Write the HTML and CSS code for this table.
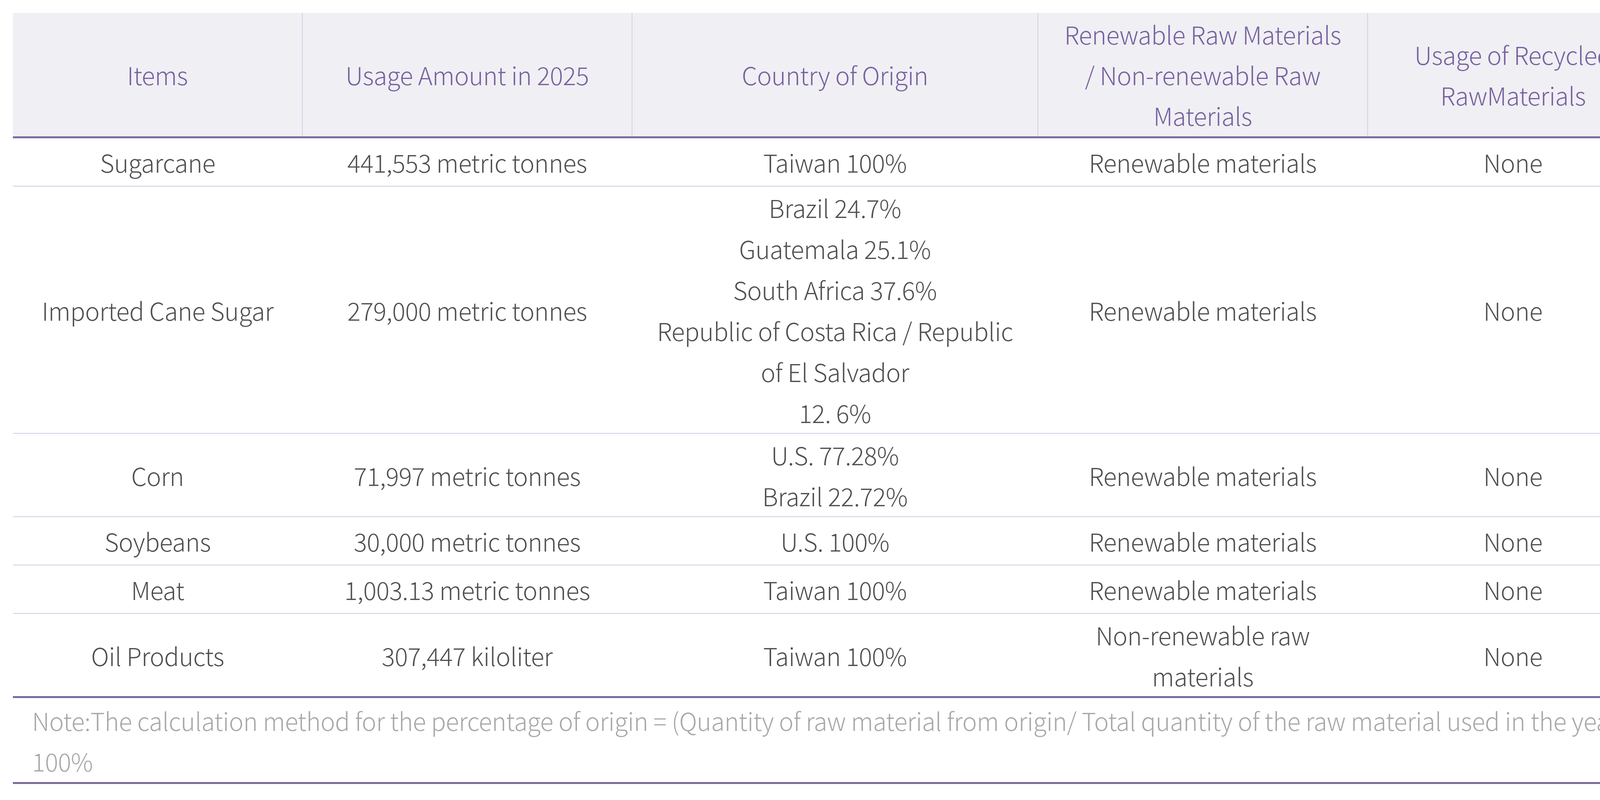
FILE: index.html
```html
<!DOCTYPE html>
<html lang="en">
<head>
<meta charset="utf-8">
<title>Raw Materials</title>
<link rel="stylesheet" href="styles.css">
</head>
<body>
<div class="wrap">
<table class="mat">
  <colgroup>
    <col class="c1"><col class="c2"><col class="c3"><col class="c4"><col class="c5">
  </colgroup>
  <thead>
    <tr>
      <th>Items</th>
      <th>Usage Amount in 2025</th>
      <th>Country of Origin</th>
      <th>Renewable Raw Materials / Non-renewable Raw Materials</th>
      <th>Usage of Recycled RawMaterials</th>
    </tr>
  </thead>
  <tbody>
    <tr class="one">
      <td>Sugarcane</td><td>441,553 metric tonnes</td><td>Taiwan 100%</td><td>Renewable materials</td><td>None</td>
    </tr>
    <tr>
      <td>Imported Cane Sugar</td><td>279,000 metric tonnes</td>
      <td>Brazil 24.7%<br>Guatemala 25.1%<br>South Africa 37.6%<br>Republic of Costa Rica / Republic of El Salvador<br>12. 6%</td>
      <td>Renewable materials</td><td>None</td>
    </tr>
    <tr>
      <td>Corn</td><td>71,997 metric tonnes</td><td>U.S. 77.28%<br>Brazil 22.72%</td><td>Renewable materials</td><td>None</td>
    </tr>
    <tr class="one">
      <td>Soybeans</td><td>30,000 metric tonnes</td><td>U.S. 100%</td><td>Renewable materials</td><td>None</td>
    </tr>
    <tr class="one">
      <td>Meat</td><td>1,003.13 metric tonnes</td><td>Taiwan 100%</td><td>Renewable materials</td><td>None</td>
    </tr>
    <tr>
      <td>Oil Products</td><td>307,447 kiloliter</td><td>Taiwan 100%</td><td>Non-renewable raw materials</td><td>None</td>
    </tr>
  </tbody>
  <tfoot>
    <tr>
      <td colspan="5">Note:The calculation method for the percentage of origin = (Quantity of raw material from origin/ Total quantity of the raw material used in the year) x 100%</td>
    </tr>
  </tfoot>
</table>
</div>
</body>
</html>
```
FILE: styles.css
```css
html, body {
  margin: 0;
  padding: 0;
  background: #ffffff;
}
.wrap {
  padding: 33px 41px 0 33px;
}
.mat {
  width: 4212px;
  border-collapse: collapse;
  table-layout: fixed;
  font-family: "Noto Sans CJK TC", "Noto Sans CJK SC", "Lato", sans-serif;
  font-weight: 300;
  font-size: 63px;
  letter-spacing: -0.5px;
}
.c1 { width: 741px; }
.c2 { width: 844px; }
.c3 { width: 1039px; }
.c4 { width: 844px; }
.c5 { width: 744px; }

.mat th {
  background: #f0eff3;
  color: #7761a1;
  font-weight: 300;
  line-height: 104px;
  height: 316px;
  padding: 0 50px;
  text-align: center;
  vertical-align: middle;
  border-left: 2px solid #d6d1e6;
  border-bottom: 5px solid #7b6b9d;
}
.mat th:first-child { border-left: none; }

.mat td {
  color: #505050;
  line-height: 105px;
  padding: 0 40px;
  text-align: center;
  vertical-align: middle;
  border-bottom: 3px solid #dedbeb;
}
.mat tr.one td {
  height: 121px;
}
.mat tfoot td {
  color: #a8a8a8;
  text-align: left;
  padding: 5px 20px 2px 49px;
  line-height: 104px;
  border-top: 5px solid #7b6b9d;
  border-bottom: 5px solid #7b6b9d;
}
```
